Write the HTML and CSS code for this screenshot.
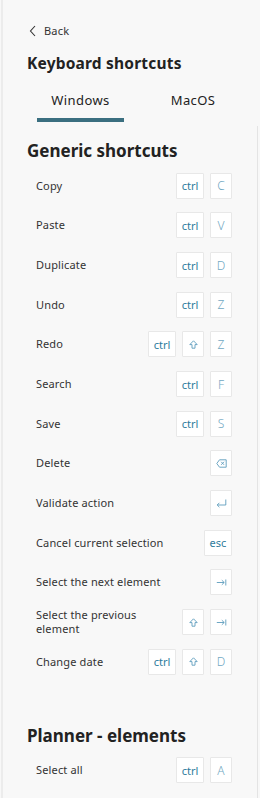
FILE: index.html
```html
<!DOCTYPE html>
<html>
<head>
<meta charset="utf-8">
<link rel="stylesheet" href="styles.css">
</head>
<body>
<div class="panel">
  <div class="back">
    <svg class="chev" width="8" height="12" viewBox="0 0 8 12"><path d="M6 1 L1.5 6 L6 11" fill="none" stroke="#333" stroke-width="1.1"/></svg>
    <span>Back</span>
  </div>
  <h1 class="title">Keyboard shortcuts</h1>
  <div class="tabs">
    <div class="tab active">Windows</div>
    <div class="tab">MacOS</div>
  </div>
  <div class="scroll">
    <h2 class="section">Generic shortcuts</h2>
    <div class="list">
      <div class="row"><span class="label">Copy</span><span class="keys"><span class="key word">ctrl</span><span class="key ch">C</span></span></div>
      <div class="row"><span class="label">Paste</span><span class="keys"><span class="key word">ctrl</span><span class="key ch">V</span></span></div>
      <div class="row"><span class="label">Duplicate</span><span class="keys"><span class="key word">ctrl</span><span class="key ch">D</span></span></div>
      <div class="row"><span class="label">Undo</span><span class="keys"><span class="key word">ctrl</span><span class="key ch">Z</span></span></div>
      <div class="row"><span class="label">Redo</span><span class="keys"><span class="key word">ctrl</span><span class="key ch"><svg width="9" height="9" viewBox="0 0 9 9"><path d="M4.5 0.8 L8.2 4.6 H6 V8.2 H3 V4.6 H0.8 Z" fill="none" stroke="#5d9dbd" stroke-width="0.9" stroke-linejoin="round"/></svg></span><span class="key ch">Z</span></span></div>
      <div class="row"><span class="label">Search</span><span class="keys"><span class="key word">ctrl</span><span class="key ch">F</span></span></div>
      <div class="row"><span class="label">Save</span><span class="keys"><span class="key word">ctrl</span><span class="key ch">S</span></span></div>
      <div class="row"><span class="label">Delete</span><span class="keys"><span class="key ch"><svg width="11" height="9" viewBox="0 0 11 9"><path d="M3.5 0.8 H10.2 V8.2 H3.5 L0.8 4.5 Z" fill="none" stroke="#5d9dbd" stroke-width="0.9" stroke-linejoin="round"/><path d="M5.2 2.8 L8 5.8 M8 2.8 L5.2 5.8" stroke="#5d9dbd" stroke-width="0.9"/></svg></span></span></div>
      <div class="row"><span class="label">Validate action</span><span class="keys"><span class="key ch"><svg width="11" height="9" viewBox="0 0 11 9"><path d="M9.8 0.5 V6 H1.2 M3.4 3.8 L1.2 6 L3.4 8.2" fill="none" stroke="#5d9dbd" stroke-width="0.9"/></svg></span></span></div>
      <div class="row"><span class="label">Cancel current selection</span><span class="keys"><span class="key word">esc</span></span></div>
      <div class="row"><span class="label">Select the next element</span><span class="keys"><span class="key ch"><svg width="11" height="9" viewBox="0 0 11 9"><path d="M0.8 4.5 H8.2 M5.8 2.2 L8.2 4.5 L5.8 6.8 M9.8 1.5 V7.5" fill="none" stroke="#5d9dbd" stroke-width="0.9"/></svg></span></span></div>
      <div class="row"><span class="label narrow">Select the previous element</span><span class="keys"><span class="key ch"><svg width="9" height="9" viewBox="0 0 9 9"><path d="M4.5 0.8 L8.2 4.6 H6 V8.2 H3 V4.6 H0.8 Z" fill="none" stroke="#5d9dbd" stroke-width="0.9" stroke-linejoin="round"/></svg></span><span class="key ch"><svg width="11" height="9" viewBox="0 0 11 9"><path d="M0.8 4.5 H8.2 M5.8 2.2 L8.2 4.5 L5.8 6.8 M9.8 1.5 V7.5" fill="none" stroke="#5d9dbd" stroke-width="0.9"/></svg></span></span></div>
      <div class="row"><span class="label">Change date</span><span class="keys"><span class="key word">ctrl</span><span class="key ch"><svg width="9" height="9" viewBox="0 0 9 9"><path d="M4.5 0.8 L8.2 4.6 H6 V8.2 H3 V4.6 H0.8 Z" fill="none" stroke="#5d9dbd" stroke-width="0.9" stroke-linejoin="round"/></svg></span><span class="key ch">D</span></span></div>
    </div>
    <h2 class="section planner">Planner - elements</h2>
    <div class="list">
      <div class="row"><span class="label">Select all</span><span class="keys"><span class="key word">ctrl</span><span class="key ch">A</span></span></div>
    </div>
  </div>
</div>
</body>
</html>
```

FILE: styles.css
```css
html, body {
  margin: 0;
  padding: 0;
  background: #f8f8f8;
}
body {
  font-family: "Noto Sans", "DejaVu Sans", sans-serif;
  color: #2b2b2b;
  width: 260px;
  height: 798px;
  overflow: hidden;
}
.panel {
  margin-left: 1px;
  border-left: 2px solid #ececec;
  height: 798px;
  box-sizing: border-box;
}
.back {
  display: flex;
  align-items: center;
  gap: 7px;
  padding: 23px 0 0 26px;
  height: 15px;
  font-size: 11px;
  letter-spacing: 0.2px;
  color: #333;
}
.chev { display: block; }
.title {
  margin: 16px 0 0 24px;
  font-size: 15.5px;
  letter-spacing: 0.2px;
  font-weight: 700;
  line-height: 18px;
  color: #222;
}
.tabs {
  display: flex;
  margin: 9px 0 0 34px;
  width: 200px;
}
.tab {
  flex: 0 0 auto;
  width: 87px;
  text-align: center;
  font-size: 13px;
  letter-spacing: 0.4px;
  line-height: 16px;
  padding: 11px 0 10px;
  color: #222;
  border-bottom: 4px solid transparent;
}
.tab + .tab { margin-left: 25px; width: 88px; }
.tab.active { border-bottom-color: #3b6f80; }
.scroll {
  margin-top: 4px;
  border-right: 1px solid #e4e4e4;
  margin-right: 2px;
  padding-bottom: 40px;
}
.section {
  margin: 0 0 0 24px;
  padding-top: 15px;
  font-size: 17px;
  font-weight: 700;
  line-height: 20px;
  color: #222;
}
.planner { padding-top: 44px; }
.list {
  margin: 5px 25px 0 33px;
}
.row {
  display: flex;
  align-items: center;
  justify-content: space-between;
  height: 39.67px;
}
.label {
  font-size: 11px;
  letter-spacing: 0.15px;
  line-height: 14px;
  color: #333;
  max-width: 140px;
}
.label.narrow { max-width: 110px; }
.keys {
  display: flex;
  gap: 6px;
}
.key {
  display: flex;
  align-items: center;
  justify-content: center;
  height: 26px;
  box-sizing: border-box;
  background: #fff;
  border: 1px solid #e8e8e8;
  border-radius: 1px;
  color: #2f7b9c;
}
.key.word {
  width: 28px;
  font-size: 11px;
}
.key.ch {
  width: 22px;
  font-size: 12px;
  font-weight: 300;
  color: #6fa7c2;
}
.key svg { display: block; }
```
